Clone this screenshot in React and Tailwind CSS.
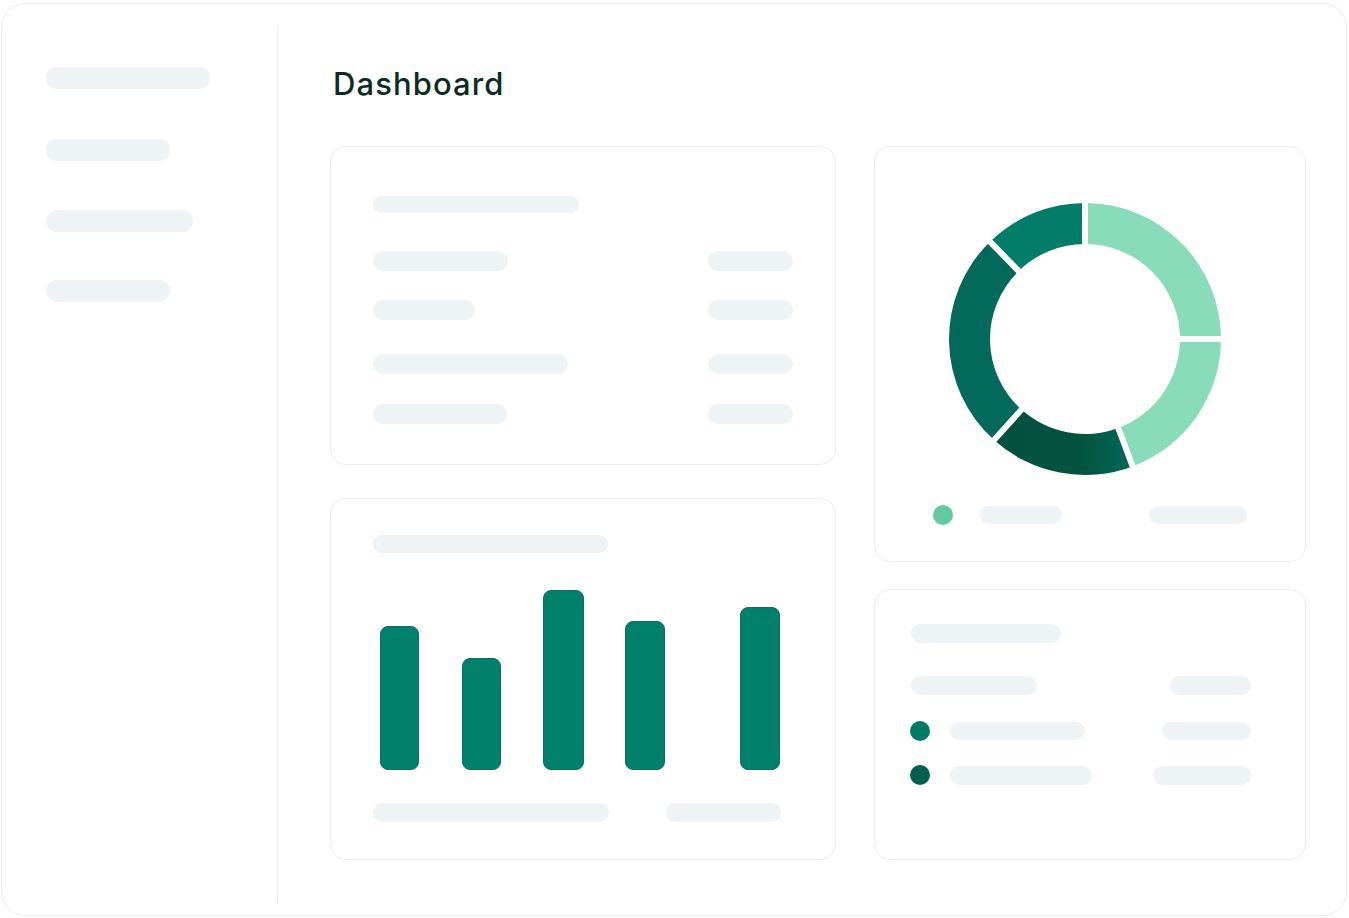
import React from 'react';

const CX = 140;
const CY = 140;
const R_OUT = 136;
const R_IN = 95;

function polar(r, deg) {
    const a = ((deg - 90) * Math.PI) / 180;
    return [CX + r * Math.cos(a), CY + r * Math.sin(a)];
}

function sector(start, end) {
    const [x1, y1] = polar(R_OUT, start);
    const [x2, y2] = polar(R_OUT, end);
    const [x3, y3] = polar(R_IN, end);
    const [x4, y4] = polar(R_IN, start);
    const large = end - start > 180 ? 1 : 0;
    return `M${x1} ${y1} A${R_OUT} ${R_OUT} 0 ${large} 1 ${x2} ${y2} L${x3} ${y3} A${R_IN} ${R_IN} 0 ${large} 0 ${x4} ${y4} Z`;
}

const segments = [
    { start: 0, end: 90, color: '#89dcba' },
    { start: 90, end: 159.5, color: '#89dcba' },
    { start: 159.5, end: 222, color: 'url(#bottomGrad)' },
    { start: 222, end: 315.7, color: '#03695a' },
    { start: 315.7, end: 360, color: '#017d69' },
];

function Donut() {
    return (
        <svg width="280" height="280" viewBox="0 0 280 280">
            <defs>
                <linearGradient id="bottomGrad" x1="0" y1="0" x2="1" y2="0">
                    <stop offset="0" stopColor="#03503f" />
                    <stop offset="0.6" stopColor="#03523f" />
                    <stop offset="1" stopColor="#02685a" />
                </linearGradient>
            </defs>
            {segments.map((s, i) => (
                <path key={i} d={sector(s.start, s.end)} fill={s.color} />
            ))}
            {segments.map((s, i) => {
                const [x1, y1] = polar(R_IN - 4, s.start);
                const [x2, y2] = polar(R_OUT + 4, s.start);
                return <line key={i} x1={x1} y1={y1} x2={x2} y2={y2} stroke="#ffffff" strokeWidth="6" />;
            })}
        </svg>
    );
}

function Bar({ className = '' }) {
    return <div className={`rounded-full bg-[#eef3f5] ${className}`} />;
}

const chartBars = [
    { h: 'h-[144px]', w: 'w-[39px]', ml: 'ml-0' },
    { h: 'h-[112px]', w: 'w-[39px]', ml: 'ml-[43px]' },
    { h: 'h-[180px]', w: 'w-[41px]', ml: 'ml-[42px]' },
    { h: 'h-[149px]', w: 'w-[40px]', ml: 'ml-[41px]' },
    { h: 'h-[163px]', w: 'w-[40px]', ml: 'ml-[75px]' },
];

export default function App() {
    return (
        <div className="min-h-screen bg-white font-['Inter',sans-serif]">
            <div className="ml-px mt-[3px] flex h-[913px] w-[1346px] rounded-[24px] border border-[#e9eef0] bg-white">
                {/* sidebar */}
                <div className="flex w-[275px] flex-col pl-[44px] pt-[63px]">
                    <Bar className="h-[22px] w-[164px]" />
                    <Bar className="mt-[50px] h-[22px] w-[124px]" />
                    <Bar className="mt-[49px] h-[22px] w-[147px]" />
                    <Bar className="mt-[48px] h-[22px] w-[124px]" />
                </div>
                <div className="mt-[22px] h-[877px] w-px bg-[#eef2f3]" />

                {/* main */}
                <div className="flex-1 pl-[52px] pt-[62px]">
                    <h1 className="pl-[3px] text-[31px] font-medium leading-[36px] tracking-[0.035em] text-[#0d2b25]">
                        Dashboard
                    </h1>

                    <div className="mt-[44px] flex gap-[38px]">
                        {/* left column */}
                        <div className="flex w-[506px] flex-col gap-[33px]">
                            <div className="h-[319px] rounded-2xl border border-[#e9eef0] px-[42px] pt-[49px]">
                                <Bar className="h-[17px] w-[206px]" />
                                <div className="mt-[38px] flex items-center justify-between">
                                    <Bar className="h-[20px] w-[135px]" />
                                    <Bar className="h-[20px] w-[85px]" />
                                </div>
                                <div className="mt-[29px] flex items-center justify-between">
                                    <Bar className="h-[20px] w-[102px]" />
                                    <Bar className="h-[20px] w-[85px]" />
                                </div>
                                <div className="mt-[34px] flex items-center justify-between">
                                    <Bar className="h-[20px] w-[195px]" />
                                    <Bar className="h-[20px] w-[85px]" />
                                </div>
                                <div className="mt-[30px] flex items-center justify-between">
                                    <Bar className="h-[20px] w-[134px]" />
                                    <Bar className="h-[20px] w-[85px]" />
                                </div>
                            </div>

                            <div className="h-[362px] rounded-2xl border border-[#e9eef0] pl-[42px] pt-[36px]">
                                <Bar className="h-[18px] w-[235px]" />
                                <div className="ml-[7px] mt-[22px] flex h-[195px] items-end">
                                    {chartBars.map((b, i) => (
                                        <div
                                            key={i}
                                            className={`${b.h} ${b.w} ${b.ml} rounded-[8px] border border-[#0a705e] bg-[#01806b]`}
                                        />
                                    ))}
                                </div>
                                <div className="mt-[33px] flex items-center">
                                    <Bar className="h-[19px] w-[236px]" />
                                    <Bar className="ml-[57px] h-[19px] w-[115px]" />
                                </div>
                            </div>
                        </div>

                        {/* right column */}
                        <div className="flex w-[432px] flex-col gap-[27px]">
                            <div className="h-[416px] rounded-2xl border border-[#e9eef0] pt-[52px]">
                                <div className="ml-[70px]">
                                    <Donut />
                                </div>
                                <div className="mt-[26px] flex items-center pl-[58px]">
                                    <div className="h-[20px] w-[20px] rounded-full bg-[#62c9a0]" />
                                    <Bar className="ml-[26px] h-[18px] w-[83px]" />
                                    <Bar className="ml-[87px] h-[18px] w-[98px]" />
                                </div>
                            </div>

                            <div className="h-[271px] rounded-2xl border border-[#e9eef0] pl-[36px] pr-[54px] pt-[34px]">
                                <Bar className="h-[19px] w-[150px]" />
                                <div className="mt-[33px] flex items-center justify-between">
                                    <Bar className="h-[19px] w-[126px]" />
                                    <Bar className="h-[19px] w-[81px]" />
                                </div>
                                <div className="mt-[26px] flex items-center justify-between">
                                    <div className="flex items-center">
                                        <div className="-ml-px h-[20px] w-[20px] rounded-full bg-[#027a66]" />
                                        <Bar className="ml-[20px] h-[18px] w-[135px]" />
                                    </div>
                                    <Bar className="h-[18px] w-[89px]" />
                                </div>
                                <div className="mt-[24px] flex items-center justify-between">
                                    <div className="flex items-center">
                                        <div className="-ml-px h-[20px] w-[20px] rounded-full bg-[#05604f]" />
                                        <Bar className="ml-[20px] h-[19px] w-[142px]" />
                                    </div>
                                    <Bar className="h-[19px] w-[98px]" />
                                </div>
                            </div>
                        </div>
                    </div>
                </div>
            </div>
        </div>
    );
}
